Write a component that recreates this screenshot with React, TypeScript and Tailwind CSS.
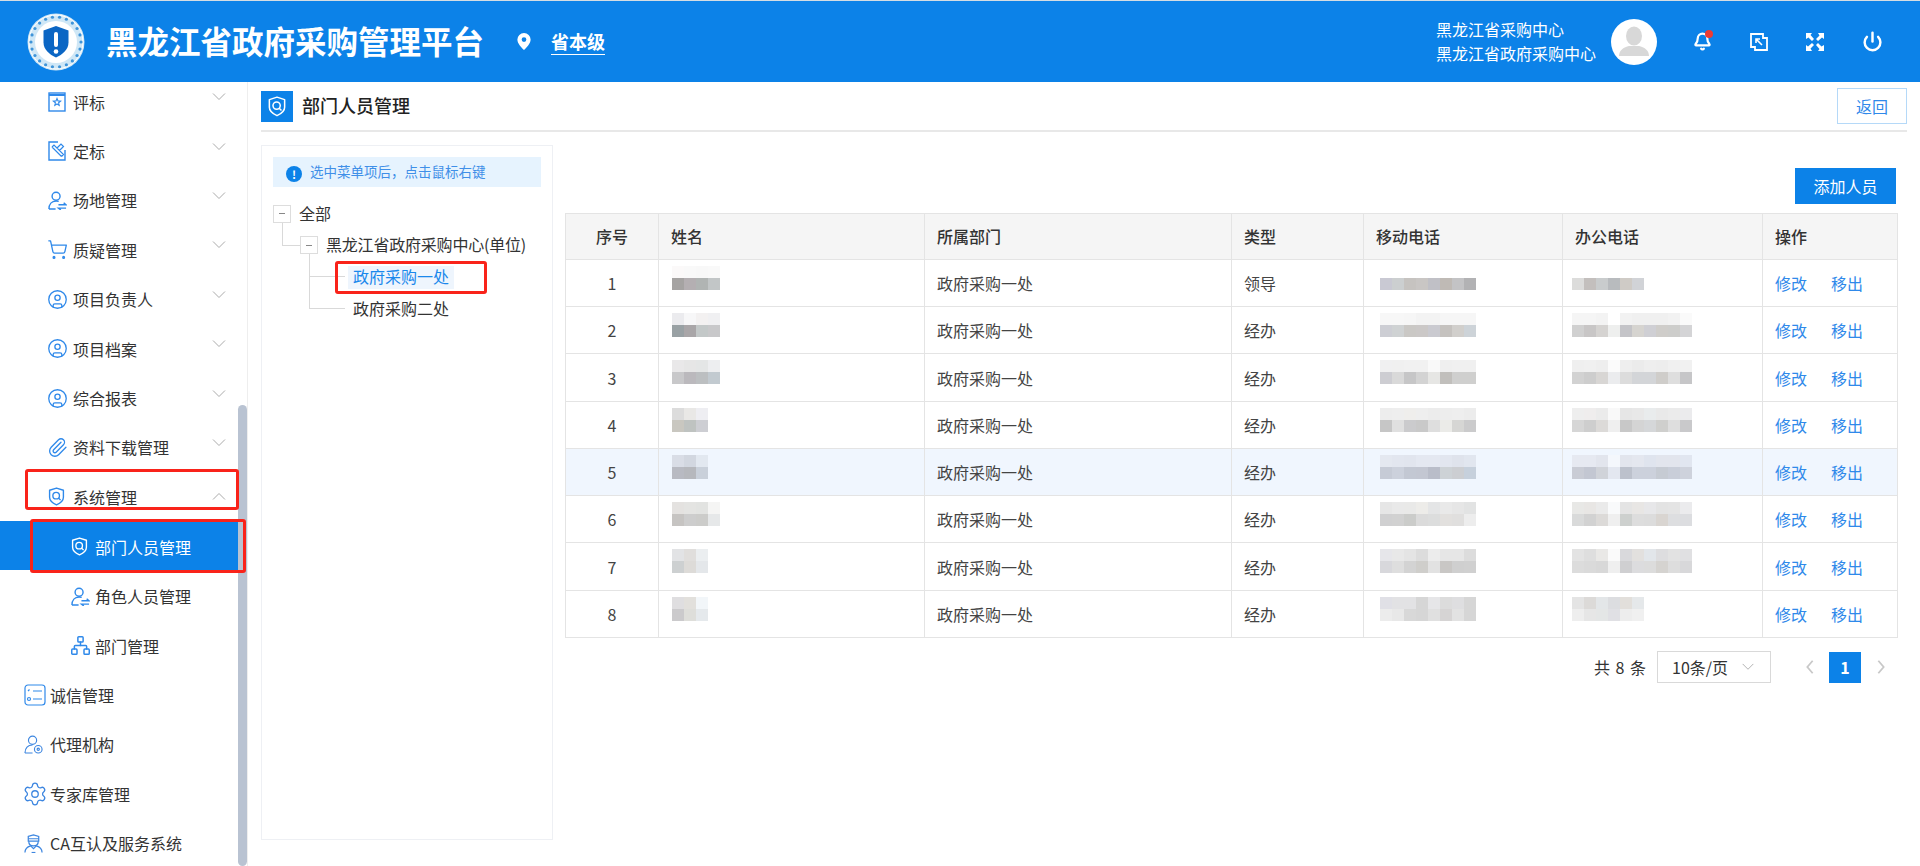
import { Bell, CircleUser, Network, Paperclip, Power, Settings, ShoppingCart } from 'lucide-react';

const BLUE = 'text-[#2f89ea]';

function IconDoc() {
  return (
    <svg viewBox="0 0 18 20" className={`h-[20px] w-[18px] ${BLUE}`} fill="none" stroke="currentColor" strokeWidth="1.4">
      <rect x="1" y="1" width="16" height="18" />
      <path d="M1 3h16" strokeWidth="2" />
      <path d="M9 6.5l1 2.4 2.6.2-2 1.7.6 2.6L9 12l-2.2 1.4.6-2.6-2-1.7 2.6-.2z" strokeWidth="1.1" />
    </svg>
  );
}

function IconPen() {
  return (
    <svg viewBox="0 0 18 20" className={`h-[20px] w-[18px] ${BLUE}`} fill="none" stroke="currentColor" strokeWidth="1.4">
      <path d="M10 1H1v18h16V9" />
      <path d="M4 6l9.500 9.500M4 6l2-2 9.500 9.500-2 2M9 7l4-4 2.500 2.500-4 4" strokeWidth="1.200" />
    </svg>
  );
}

function IconUserArrows() {
  return (
    <svg viewBox="0 0 20 20" className={`h-[19px] w-[19px] ${BLUE}`} fill="none" stroke="currentColor" strokeWidth="1.5">
      <circle cx="8.5" cy="5.5" r="4.2" />
      <path d="M1 19c0-5 3-8.500 7.500-8.500 1 0 2 .2 2.800.5M1 19h7" />
      <path d="M11 14.500h8l-2.500-2.200M19 18h-8l2.500 2" />
    </svg>
  );
}

function IconShield({ className }: { className: string }) {
  return (
    <svg viewBox="1 0 18 22" className={`shrink-0 ${className}`} fill="none" stroke="currentColor" strokeWidth="1.6">
      <path d="M10 1.200l8 2.600v8c0 4-3.500 6.800-8 8.800-4.500-2-8-4.800-8-8.800v-8z" strokeLinejoin="round" />
      <circle cx="9.600" cy="10" r="3.800" />
      <path d="M12.300 12.800l2.400 2.400" />
    </svg>
  );
}

function IconList() {
  return (
    <svg viewBox="0 0 22 22" className={`h-[22px] w-[22px] ${BLUE}`} fill="none" stroke="currentColor" strokeWidth="1.200">
      <rect x="1" y="1" width="20" height="20" rx="3" />
      <path d="M9 7h9M9 15h9M4 7l1.500-1.500" />
      <circle cx="5" cy="15" r="1.500" />
    </svg>
  );
}

function IconAgent() {
  return (
    <svg viewBox="0 0 20 20" className="h-[19px] w-[19px] text-[#3d86e0]" fill="none" stroke="currentColor" strokeWidth="1.200">
      <circle cx="9" cy="5.500" r="4.300" />
      <path d="M1 19c.2-5 3-8.500 8-8.500M1 19h8" />
      <circle cx="15" cy="15" r="4" />
      <circle cx="15" cy="15" r="1.200" />
    </svg>
  );
}

function IconCa() {
  return (
    <svg viewBox="0 0 20 20" className="h-[19px] w-[19px] text-[#3d86e0]" fill="none" stroke="currentColor" strokeWidth="1.300">
      <path d="M4.500 2.500L10 1l5.500 1.500v5h-11z" />
      <path d="M5 7.500c0 3 2 5 5 5s5-2 5-5M4.500 5h11" />
      <path d="M1 19.500c0-4 2.500-6 6-7l3 3 3-3c3.500 1 6 3 6 7" />
      <path d="M8 19.500h4" />
    </svg>
  );
}

function Chevron({ up, className }: { up?: boolean; className: string }) {
  return (
    <svg viewBox="0 0 14 8" className={`h-[8px] w-[14px] text-[#aaaaaa] ${className}`} fill="none" stroke="currentColor" strokeWidth="1">
      <path d={up ? 'M1 7.500L7 1.500l6 6' : 'M1 .500l6 6 6-6'} />
    </svg>
  );
}

function Logo() {
  const dots = Array.from({ length: 22 }, (_, i) => (i * Math.PI * 2) / 22);
  return (
    <svg viewBox="0 0 58 58" className="h-[58px] w-[58px]">
      <circle cx="29" cy="29" r="28.500" fill="#cfe7f6" />
      <circle cx="29" cy="29" r="27" fill="none" stroke="#ffffff" strokeWidth="1" />
      {dots.map((a) => (
        <circle key={a} cx={29 + 25 * Math.cos(a)} cy={29 + 25 * Math.sin(a)} r="1.600" fill="#3f94d8" />
      ))}
      <circle cx="29" cy="29" r="21" fill="#ffffff" />
      <path d="M29 13l12.500 4.500v12c0 7-6 12-12.500 15-6.500-3-12.500-8-12.500-15v-12z" fill="#0b66c4" />
      <rect x="27" y="19" width="4" height="15" rx="2" fill="#ffffff" />
      <circle cx="29" cy="38.500" r="2.300" fill="#ffffff" />
    </svg>
  );
}

type MenuRow = {
  label: string;
  icon: React.ReactNode;
  level: 0 | 1 | 2;
  chevron?: 'down' | 'up';
  active?: boolean;
};

const lucideIcon = `-ml-[1px] h-[21px] w-[21px] shrink-0 ${BLUE}`;

const menu: MenuRow[] = [
  { label: '评标', icon: <IconDoc />, level: 1, chevron: 'down' },
  { label: '定标', icon: <IconPen />, level: 1, chevron: 'down' },
  { label: '场地管理', icon: <IconUserArrows />, level: 1, chevron: 'down' },
  { label: '质疑管理', icon: <ShoppingCart className={lucideIcon} strokeWidth={1.5} />, level: 1, chevron: 'down' },
  { label: '项目负责人', icon: <CircleUser className={lucideIcon} strokeWidth={1.5} />, level: 1, chevron: 'down' },
  { label: '项目档案', icon: <CircleUser className={lucideIcon} strokeWidth={1.5} />, level: 1, chevron: 'down' },
  { label: '综合报表', icon: <CircleUser className={lucideIcon} strokeWidth={1.5} />, level: 1, chevron: 'down' },
  { label: '资料下载管理', icon: <Paperclip className={lucideIcon} strokeWidth={1.5} />, level: 1, chevron: 'down' },
  { label: '系统管理', icon: <IconShield className={`h-[19px] w-[17px] ${BLUE}`} />, level: 1, chevron: 'up' },
  { label: '部门人员管理', icon: <IconShield className="h-[19px] w-[17px] text-white" />, level: 2, active: true },
  { label: '角色人员管理', icon: <IconUserArrows />, level: 2 },
  { label: '部门管理', icon: <Network className={lucideIcon} strokeWidth={1.7} />, level: 2 },
  { label: '诚信管理', icon: <IconList />, level: 0 },
  { label: '代理机构', icon: <IconAgent />, level: 0 },
  { label: '专家库管理', icon: <Settings className="-ml-[2px] h-[26px] w-[26px] shrink-0 text-[#3d86e0]" strokeWidth={1.2} />, level: 0 },
  { label: 'CA互认及服务系统', icon: <IconCa />, level: 0 },
];

function SidebarRow({ row }: { row: MenuRow }) {
  const pad = row.level === 0 ? 'pl-[24px]' : row.level === 1 ? 'pl-[48px]' : 'pl-[71px]';
  const iconBox = row.level === 0 ? 'w-[26px]' : row.level === 1 ? 'w-[25px]' : 'w-[24px]';
  const rowBox = row.active
    ? '-mt-[2px] mb-[3px] h-[49px] pt-[3px] bg-[#0c82e8] text-white'
    : 'h-[49.400px] pb-[2px] text-[#333333]';
  return (
    <div className={`flex shrink-0 items-center pr-[12px] text-[16px] ${pad} ${rowBox}`}>
      <span className={`flex shrink-0 items-center ${iconBox}`}>{row.icon}</span>
      <span>{row.label}</span>
      {row.chevron === 'down' && <Chevron className="ml-auto mb-[9px]" />}
      {row.chevron === 'up' && <Chevron up className="ml-auto mb-[2px]" />}
    </div>
  );
}

type Person = {
  no: number;
  role: string;
  h: string;
  hover?: boolean;
  name: string[][];
  mobile: string[][];
  office: string[][];
};

const people: Person[] = [
  {
    no: 1,
    role: '领导',
    h: 'h-[47px]',
    name: [['#fbf9f9', '#f9f9f9', '#f8f8f8', '#f9f9f9'], ['#a5a3a2', '#b4afb2', '#b0b4b3', '#c2c6c7']],
    mobile: [[], ['#c9c9d3', '#cccfd0', '#c6c3c0', '#c9c6c4', '#c0c0c6', '#bfbab5', '#c3c3c5', '#b2b2b4']],
    office: [[], ['#dcdcdb', '#c3bfbd', '#c9cccd', '#b8bbbe', '#cfcbc6', '#d1d3d7']],
  },
  {
    no: 2,
    role: '经办',
    h: 'h-[47px]',
    name: [['#ebebee', '#f7f7f8', '#f3f1f1', '#f0f0f2'], ['#99a1a4', '#a9a6a8', '#c3c8c8', '#c8c8ca']],
    mobile: [['#f7f7f7', '#f7f7f7', '#f6f6f6', '#f3f3f3', '#f3f3f3', '#f6f6f6', '#f6f6f6', '#f6f6f6'], ['#cdced4', '#cfd2d3', '#cac8c5', '#cbc8c7', '#cacad0', '#c5c2bf', '#d1cfcc', '#cdd3d8']],
    office: [['#f5f5f5', '#f5f5f5', '#f3f3f3', '#ffffff', '#f2f2f2', '#f0f0f0', '#f0f0f0', '#f0f0f0', '#f2f2f2', '#fafafa'], ['#d0d0d0', '#c8c6c6', '#d5d3d1', '#eeefee', '#c4c4c8', '#d6d4d0', '#cfcfd4', '#cfcdca', '#cdcdcb', '#d4d4d6']],
  },
  {
    no: 3,
    role: '经办',
    h: 'h-[48px]',
    name: [['#e9e8e9', '#e6e6e6', '#e4e6e6', '#edeef0'], ['#c8c8ca', '#bbb9bd', '#bcbfc1', '#c2cad0']],
    mobile: [['#f0f0f1', '#f0f0f0', '#f1f1f1', '#f1f1f1', '#f9f9f9', '#efefef', '#f0f0f0', '#f0f0f0'], ['#cdcdd2', '#d9d9d9', '#c6c6c7', '#d3d3d3', '#e6e6e4', '#c1bfbc', '#cfcfce', '#cfcfce']],
    office: [['#efefef', '#f0f0f0', '#eeeeee', '#fbfbfb', '#eeeeee', '#ebebeb', '#eeeeee', '#ededed', '#f0f0f0', '#f1f1f1'], ['#d2d2d2', '#cdcdcd', '#d8d6d4', '#ebecee', '#dcdcdc', '#d3d5d8', '#d3d5d8', '#cfcdca', '#dedede', '#c6c6c8']],
  },
  {
    no: 4,
    role: '经办',
    h: 'h-[47px]',
    name: [['#dcdcdc', '#e9e8e6', '#eeeef2'], ['#c9c7c0', '#bfc3c1', '#cdced3']],
    mobile: [['#ededed', '#eeeeee', '#efeeec', '#eeeeee', '#ececec', '#ededed', '#eeeeee', '#ececec'], ['#c6c6c6', '#e0e0e0', '#cbcbcd', '#c9c9c9', '#dedede', '#ebebe8', '#d6d6d4', '#cbcbcc']],
    office: [['#eeeeee', '#efeded', '#ebebeb', '#f9f9f9', '#e6e6e6', '#e8e8e8', '#e9eced', '#e9e9e9', '#ebebeb', '#ebebed'], ['#d6d6d6', '#cecece', '#dcdad8', '#efefef', '#c8c8c8', '#d4d4d4', '#d5d7d9', '#cfcfcd', '#dedede', '#c9c9cb']],
  },
  {
    no: 5,
    role: '经办',
    h: 'h-[47px]',
    hover: true,
    name: [['#d9dde6', '#d2d7e0', '#e2e8f0'], ['#b8bac2', '#b6b8bd', '#c9d0da']],
    mobile: [['#e4e8f0', '#e2e6ef', '#e1e5ee', '#e4e8f1', '#e4e8f1', '#e2e6ef', '#dfe3ec', '#e1e6ef'], ['#c6cbd6', '#ccd1dc', '#c3c8d3', '#c3c7d2', '#b9bdc9', '#cdd2d6', '#ccced2', '#c6d0dc']],
    office: [['#e6e9f1', '#e6e9f1', '#e2e5ed', '#f4f7fc', '#e2e5ed', '#e4e7ef', '#dfe4ee', '#e2e5ed', '#e2e5ed', '#e1e6f0'], ['#c9ccd5', '#c3c7d2', '#d0d3d9', '#e3e7f0', '#bcc1cc', '#ccd1dc', '#ccd1dc', '#c6cbd3', '#c9ced9', '#ced2dc']],
  },
  {
    no: 6,
    role: '经办',
    h: 'h-[47px]',
    name: [['#e4e2e0', '#e4e4e2', '#e2e3e1', '#f5f5f4'], ['#c6c4c2', '#cdcdcd', '#ccccca', '#e6e8e9']],
    mobile: [['#e6e6e6', '#e9e9e9', '#e9e9e8', '#edece9', '#e4e5e6', '#e9e9e9', '#e6e6e6', '#e2e3e3'], ['#d0d0d1', '#d1d1d1', '#cbccca', '#dbdbdb', '#dcdddd', '#e2e0de', '#e0dfde', '#ededed']],
    office: [['#e8e8e6', '#e8e6e4', '#eaeaea', '#f9fafb', '#e4e4e4', '#e8e6e4', '#e7e7e9', '#e3e3e3', '#e4e4e4', '#ebebed'], ['#d9dada', '#d2d2d2', '#dcdad8', '#efefef', '#cdd0ce', '#dddddd', '#dcdcdc', '#d9d5d1', '#dddee0', '#dcdde0']],
  },
  {
    no: 7,
    role: '经办',
    h: 'h-[48px]',
    name: [['#e2e3e5', '#e0dedc', '#ebeef0'], ['#cdd0d1', '#dddbd8', '#e4e7ea']],
    mobile: [['#e6e6ea', '#e8e8e8', '#e4e4e4', '#dcdcdc', '#ececec', '#e6e6e6', '#e6e6e6', '#dcdcdc'], ['#d8d8dc', '#dedede', '#d3d3d3', '#cfcecb', '#e2e2e2', '#c9c7c5', '#cfcfcf', '#d0d0d0']],
    office: [['#e3e3e3', '#dedede', '#e9e8e6', '#fafafa', '#d9d9dc', '#e2e0de', '#e2e6ea', '#dddddf', '#e2e2e2', '#e0e0e2'], ['#dcdcdc', '#dadada', '#d8d8d8', '#efefef', '#cfcfd1', '#dcdcde', '#dcdcdc', '#d5d3d0', '#dddddd', '#d8d8da']],
  },
  {
    no: 8,
    role: '经办',
    h: 'h-[47px]',
    name: [['#dfdee0', '#e2e0dc', '#f2f6f9'], ['#cbcacc', '#dededa', '#e5e9ec']],
    mobile: [['#e0e0e6', '#e2e2e4', '#e2e2e4', '#d6d6d6', '#e6e6e8', '#dcdcdc', '#dedee0', '#d6d6d6'], ['#ececec', '#e8e8e8', '#d8d8d8', '#d6d6d6', '#e0e0e0', '#d6d4d4', '#e2e2e2', '#d6d6d6']],
    office: [['#e4e4e4', '#dcdad8', '#e3e6e8', '#dcdde0', '#e2dfdb', '#e5e8ea'], ['#eeeeee', '#e6e6e6', '#e4e6e6', '#e0e0e4', '#ededed', '#f0f0f0']],
  },
];

// the source screenshot has these cells pixelated out
function Mosaic({ rows, className }: { rows: string[][]; className: string }) {
  return (
    <div className={className}>
      {rows.map((cells, r) => (
        <div key={r} className="flex h-[12px]">
          {cells.map((c, i) => (
            <div key={i} className="h-[12px] w-[12px]" style={{ backgroundColor: c }} />
          ))}
        </div>
      ))}
    </div>
  );
}

const th = 'border border-[#e4e4e4] bg-[#f5f5f5] px-[12px] pb-[2px] font-medium text-[#333333]';
const td = 'border border-[#e4e4e4] px-[12px] text-left';
const mosaicTd = 'border border-[#e4e4e4] p-0 align-top';

function PersonTable() {
  return (
    <table className="w-[1332px] table-fixed border-collapse text-left text-[16px] text-[#444444]">
      <colgroup>
        <col className="w-[93px]" />
        <col className="w-[266px]" />
        <col className="w-[307px]" />
        <col className="w-[132px]" />
        <col className="w-[199px]" />
        <col className="w-[200px]" />
        <col className="w-[135px]" />
      </colgroup>
      <thead>
        <tr className="h-[46px]">
          <th className={`${th} text-center`}>序号</th>
          <th className={`${th} text-left`}>姓名</th>
          <th className={`${th} text-left`}>所属部门</th>
          <th className={`${th} text-left`}>类型</th>
          <th className={`${th} text-left`}>移动电话</th>
          <th className={`${th} text-left`}>办公电话</th>
          <th className={`${th} text-left`}>操作</th>
        </tr>
      </thead>
      <tbody>
        {people.map((p) => (
          <tr key={p.no} className={`${p.h} ${p.hover ? 'bg-[#f0f6fe]' : 'bg-white'}`}>
            <td className="border border-[#e4e4e4] px-[12px] text-center">{p.no}</td>
            <td className={mosaicTd}>
              <Mosaic rows={p.name} className="ml-[13px] mt-[6px]" />
            </td>
            <td className={td}>政府采购一处</td>
            <td className={td}>{p.role}</td>
            <td className={mosaicTd}>
              <Mosaic rows={p.mobile} className="ml-[16px] mt-[6px]" />
            </td>
            <td className={mosaicTd}>
              <Mosaic rows={p.office} className="ml-[9px] mt-[6px]" />
            </td>
            <td className={td}>
              <span className="text-[#2f89ea]">修改</span>
              <span className="ml-[24px] text-[#2f89ea]">移出</span>
            </td>
          </tr>
        ))}
      </tbody>
    </table>
  );
}

function TreePanel() {
  return (
    <div className="h-[695px] w-[292px] shrink-0 border border-[#eef0f4] p-[11px]">
      <div className="flex h-[30px] w-[268px] items-center bg-[#e6f3fe] pl-[13px] text-[13.500px] text-[#3f8fe8]">
        <span className="mr-[8px] mt-[4px] flex h-[16px] w-[16px] items-center justify-center rounded-full bg-[#0c82e8] text-[11px] font-bold leading-none text-white">!</span>
        <span className="-mt-[2px]">选中菜单项后，点击鼠标右键</span>
      </div>
      <div className="relative mt-[11px] text-[16px] text-[#333333]">
        <div className="absolute left-[9px] top-[25px] h-[23px] w-[18px] border-b border-l border-[#d9d9d9]" />
        <div className="absolute left-[36px] top-[56px] h-[23px] w-[36px] border-b border-l border-[#d9d9d9]" />
        <div className="absolute left-[36px] top-[56px] h-[55px] w-[36px] border-b border-l border-[#d9d9d9]" />
        <div className="flex h-[31px] items-center gap-[8px]">
          <span className="flex h-[18px] w-[18px] items-center justify-center border border-[#dddddd]">
            <span className="h-px w-[6px] bg-[#888888]" />
          </span>
          <span className="-mt-[2px]">全部</span>
        </div>
        <div className="ml-[27px] flex h-[32px] items-center gap-[8px]">
          <span className="flex h-[18px] w-[18px] items-center justify-center border border-[#dddddd]">
            <span className="h-px w-[6px] bg-[#888888]" />
          </span>
          <span className="-mt-[2px] tracking-[-0.2px]">黑龙江省政府采购中心(单位)</span>
        </div>
        <div className="ml-[75px] flex h-[32px] items-center">
          <span className="flex h-[23px] items-center bg-[#eef5fd] px-[5px] pb-[2px] text-[#1a88ec]">政府采购一处</span>
        </div>
        <div className="ml-[75px] flex h-[32px] items-center px-[5px] pb-[2px]">政府采购二处</div>
      </div>
    </div>
  );
}

function HeaderIcons() {
  return (
    <div className="ml-[36px] flex items-center gap-[38px] pr-[37px] text-white">
      <span className="relative">
        <Bell className="h-[19px] w-[19px]" strokeWidth={2.800} />
        <span className="absolute -right-[1px] -top-[2px] h-[8px] w-[8px] rounded-full bg-[#ee3b32]" />
      </span>
      <svg viewBox="0 0 18 18" className="h-[18px] w-[18px]" fill="none" stroke="currentColor" strokeWidth="2">
        <path d="M1 1h12v4h4v12H5v-3H1z" strokeWidth="1.800" />
        <path d="M6 6l6 6M6 10V6h4" strokeWidth="1.600" />
      </svg>
      <svg viewBox="0 0 18 18" className="h-[18px] w-[18px]" fill="currentColor">
        <path d="M0 0h6L4.500 2 8 6 6 8 2.500 4.500 0 6zM18 0v6l-2-1.500L12 8l-2-2 3.500-3.500L12 0zM0 18v-6l2 1.500L6 10l2 2-3.500 3.500L6 18zM18 18h-6l1.500-2L10 12l2-2 3.500 3.500L18 12z" />
      </svg>
      <Power className="h-[21px] w-[21px]" strokeWidth={2.800} />
    </div>
  );
}

export default function App() {
  return (
    <div className="relative flex h-screen w-full flex-col overflow-hidden bg-white font-['Noto_Sans_CJK_SC','Noto_Sans',sans-serif]">
      <header className="flex h-[82px] shrink-0 items-center border-t border-[#d5dde3] bg-[#0c82e8] pl-[27px] text-white">
        <Logo />
        <h1 className="ml-[21px] pb-[1px] text-[31.500px] font-bold leading-none">黑龙江省政府采购管理平台</h1>
        <svg viewBox="0 0 14 18" className="ml-[33px] h-[17px] w-[14px]" fill="#ffffff">
          <path fillRule="evenodd" d="M7 0a7 7 0 0 1 7 7c0 4-4 8.500-7 11-3-2.500-7-7-7-11a7 7 0 0 1 7-7zm0 4.500a2.500 2.500 0 1 0 0 5 2.500 2.500 0 0 0 0-5z" />
        </svg>
        <span className="ml-[20px] mt-[1px] border-b border-white pb-[1px] text-[18px] font-bold leading-[24px]">省本级</span>
        <div className="ml-auto pb-[1px] text-[16px] leading-[24px]">
          <div>黑龙江省采购中心</div>
          <div>黑龙江省政府采购中心</div>
        </div>
        <div className="ml-[15px] flex h-[46px] w-[46px] items-center justify-center overflow-hidden rounded-full bg-white">
          <svg viewBox="0 0 46 46" className="h-[46px] w-[46px]" fill="#d8d8d8">
            <ellipse cx="23" cy="17" rx="8" ry="9.500" />
            <path d="M8 37c0-6 5-9 10-10h10c5 1 10 4 10 10z" />
          </svg>
        </div>
        <HeaderIcons />
      </header>

      <div className="flex min-h-0 flex-1">
        <aside className="relative w-[248px] shrink-0 overflow-hidden border-r border-[#eeeeee]">
          <div className="-mt-[4px] flex w-[238px] flex-col">
            {menu.map((row) => (
              <SidebarRow key={row.label} row={row} />
            ))}
          </div>
          <div className="absolute bottom-0 left-[238px] top-[323px] w-[9px] rounded-[5px] bg-[#b9c3d2]" />
        </aside>

        <main className="min-w-0 flex-1 px-[13px]">
          <div className="flex h-[50px] items-center border-b-2 border-[#e8e8e8]">
            <span className="flex h-[31px] w-[32px] items-center justify-center bg-[#0c82e8]">
              <IconShield className="h-[21px] w-[18px] text-white" />
            </span>
            <span className="ml-[9px] pb-[1px] text-[18px] font-medium text-[#222222]">部门人员管理</span>
            <button className="ml-auto h-[36px] w-[70px] border border-[#b5d9f8] bg-white text-[16px] text-[#2f89ea]">返回</button>
          </div>

          <div className="mt-[13px] flex gap-[12px]">
            <TreePanel />
            <div className="min-w-0 flex-1">
              <div className="flex justify-end pr-[11px] pt-[23px]">
                <button className="h-[36px] w-[101px] bg-[#0c82e8] text-[16px] text-white">添加人员</button>
              </div>
              <div className="mt-[9px]">
                <PersonTable />
              </div>
              <div className="mt-[13px] flex w-[1332px] items-center justify-end pr-[10px] text-[16px] text-[#333333]">
                <span className="[word-spacing:2px]">共 8 条</span>
                <div className="ml-[11px] flex h-[32px] w-[114px] items-center justify-between border-[1.500px] border-[#d9d9d9] pl-[14px] pr-[15px]">
                  <span>10条/页</span>
                  <Chevron className="scale-90" />
                </div>
                <svg viewBox="0 0 12 18" className="ml-[33px] h-[16px] w-[12px] text-[#c8c8c8]" fill="none" stroke="currentColor" strokeWidth="2">
                  <path d="M9 2L3 9l6 7" />
                </svg>
                <span className="ml-[13px] flex h-[31px] w-[32px] items-center justify-center bg-[#0c82e8] font-bold text-white">1</span>
                <svg viewBox="0 0 12 18" className="ml-[14px] h-[16px] w-[12px] text-[#c8c8c8]" fill="none" stroke="currentColor" strokeWidth="2">
                  <path d="M3 2l6 7-6 7" />
                </svg>
              </div>
            </div>
          </div>
        </main>
      </div>

      {/* red annotation boxes drawn on the screenshot */}
      <div className="absolute left-[25px] top-[469px] h-[41px] w-[214px] rounded-[3px] border-[3px] border-[#f9231a]" />
      <div className="absolute left-[30px] top-[519px] h-[54px] w-[216px] rounded-[3px] border-[3px] border-[#f9231a]" />
      <div className="absolute left-[335px] top-[261px] h-[33px] w-[152px] rounded-[3px] border-[3px] border-[#f9231a]" />
    </div>
  );
}
